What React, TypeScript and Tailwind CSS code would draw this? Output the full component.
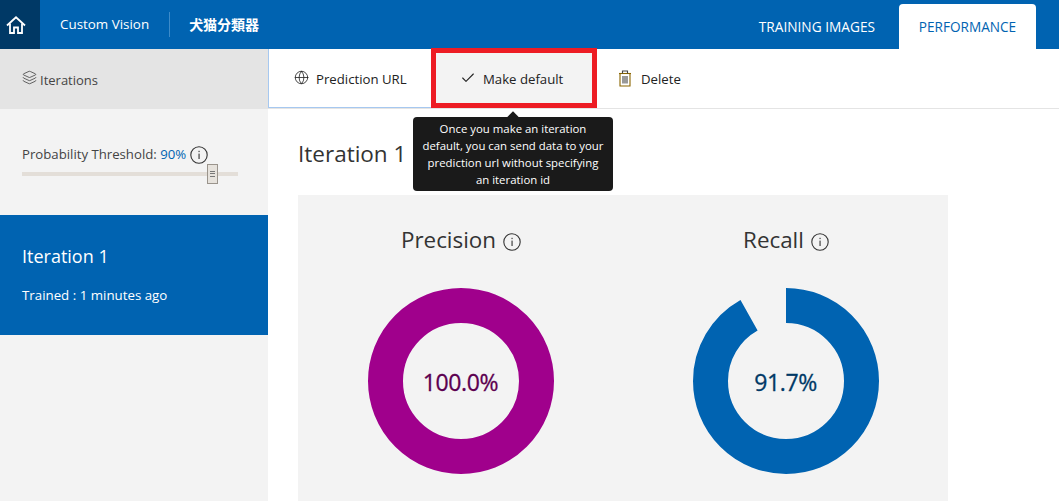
import { Check, Globe, Layers } from "lucide-react";

const font = { fontFamily: '"Open Sans", "Noto Sans CJK SC", sans-serif' };

function HomeIcon() {
  return (
    <svg width="20" height="18" viewBox="0 0 20 18" fill="none" stroke="currentColor" strokeWidth="1.8">
      <path d="M1 9.5 10 1.3l9 8.2" />
      <path d="M4 7.5V17h4v-5.5h4V17h4V7.5" />
    </svg>
  );
}

function TrashIcon() {
  return (
    <svg width="14" height="17" viewBox="0 0 14 17" fill="none" stroke="#8a6500" strokeWidth="1.1">
      <path d="M1 3.5h12" />
      <path d="M4.5 3.5V1h5v2.5" stroke="#444" />
      <path d="M2 3.5V16h10V3.5" />
      <path d="M5 6v7.5M7 6v7.5M9 6v7.5" stroke="#444" />
    </svg>
  );
}

function InfoIcon({ size = 18 }: { size?: number }) {
  return (
    <svg width={size} height={size} viewBox="0 0 18 18" fill="none" className="shrink-0">
      <circle cx="9" cy="9" r="8.2" stroke="#333" strokeWidth="1.1" />
      <rect x="8.5" y="7.6" width="1.1" height="5.4" fill="#333" />
      <rect x="8.5" y="4.8" width="1.1" height="1.3" fill="#333" />
    </svg>
  );
}

function Donut({ value, color, textColor }: { value: number; color: string; textColor: string }) {
  const r = 75.5;
  const circumference = 2 * Math.PI * r;
  return (
    <div className="relative h-[186px] w-[186px]">
      <svg width="186" height="186" viewBox="0 0 186 186" className="-rotate-90">
        <circle
          cx="93"
          cy="93"
          r={r}
          fill="none"
          stroke={color}
          strokeWidth="35"
          strokeDasharray={`${circumference * value} ${circumference}`}
        />
      </svg>
      <div
        className="absolute inset-0 flex items-center justify-center pt-[2px] text-[23px] tracking-[-0.4px] [-webkit-text-stroke:0.3px]"
        style={{ color: textColor }}
      >
        {(value * 100).toFixed(1)}%
      </div>
    </div>
  );
}

function Metric({ label, value, color, textColor }: { label: string; value: number; color: string; textColor: string }) {
  return (
    <div className="flex flex-col items-center pt-[28px]">
      <div className="flex h-[34px] items-center gap-[7px] pl-[1px] text-[22.4px] leading-none text-[#333]">
        <span>{label}</span>
        <span className="mt-[3px]">
          <InfoIcon />
        </span>
      </div>
      <div className="mt-[31px]">
        <Donut value={value} color={color} textColor={textColor} />
      </div>
    </div>
  );
}

export default function App() {
  return (
    <div className="relative flex h-[501px] w-[1059px] flex-col overflow-hidden bg-white text-[#333]" style={font}>
      {/* Header */}
      <header className="flex h-[49px] shrink-0 items-stretch bg-[#0063b1] text-white">
        <div className="flex w-[40px] items-center justify-start bg-[#003966] pl-[6px]">
          <HomeIcon />
        </div>
        <div className="flex items-center pl-[20px] pr-[20px] text-[13.4px]">Custom Vision</div>
        <div className="my-[12px] w-px bg-[#3d8bc9]" />
        <div className="flex items-center pl-[19px] text-[14px] font-bold">犬猫分類器</div>
        <div className="ml-auto flex items-end pr-[23px]">
          <div className="flex h-[45px] items-center px-[24px] pt-[2px] text-[13.7px]">TRAINING IMAGES</div>
          <div className="flex h-[45px] w-[137px] items-center justify-center rounded-t-[4px] bg-white pt-[2px] text-[13.6px] text-[#0063b1]">
            PERFORMANCE
          </div>
        </div>
      </header>

      <div className="flex min-h-0 flex-1">
        {/* Sidebar */}
        <aside className="flex w-[268px] shrink-0 flex-col bg-[#f3f3f3]">
          <div className="flex h-[60px] items-center gap-[3px] bg-[#e4e4e4] pl-[22px] text-[13px] text-[#444]">
            <Layers size={15} strokeWidth={1.3} className="-mt-[3px]" />
            <span className="mt-[3px]">Iterations</span>
          </div>
          <div className="h-[106px] px-[22px] pt-[36px]">
            <div className="flex items-center gap-[4px] text-[13.2px] text-[#444]">
              <span className="whitespace-nowrap">
                Probability Threshold: <span className="text-[#0063b1]">90%</span>
              </span>
              <InfoIcon />
            </div>
            <div className="relative mt-[7px] h-[4px] w-[216px] bg-[#e3ded8]">
              <div className="absolute left-[185px] top-[-8px] flex h-[20px] w-[11px] flex-col items-center justify-center gap-[1.5px] border border-[#9a948c] bg-[#e6e2dc]">
                <span className="h-px w-[5px] bg-[#777]" />
                <span className="h-px w-[5px] bg-[#777]" />
                <span className="h-px w-[5px] bg-[#777]" />
              </div>
            </div>
          </div>
          <div className="flex h-[120px] flex-col bg-[#0063b1] pl-[22px] pt-[27px] text-white">
            <div className="text-[18px] leading-[28px]">Iteration 1</div>
            <div className="mt-[16px] text-[13.3px] leading-[18px]">Trained : 1 minutes ago</div>
          </div>
        </aside>

        {/* Main */}
        <main className="min-w-0 flex-1">
          <div className="flex h-[60px] items-stretch border-b border-[#e4e4e4] text-[13.2px] text-[#222]">
            <div className="flex w-[163px] items-center gap-[7px] border-b border-l border-[#a6c8f0] pl-[25px]">
              <Globe size={15} strokeWidth={1.3} className="-mt-[2px]" />
              <span className="mt-[3px]">Prediction URL</span>
            </div>
            <div className="flex w-[165px] items-center gap-[7px] bg-[#f3f3f3] pl-[29px]">
              <Check size={16} strokeWidth={1.6} className="-mt-[2px]" />
              <span className="mt-[3px]">Make default</span>
            </div>
            <div className="flex items-center gap-[9px] pl-[22px]">
              <TrashIcon />
              <span className="mt-[3px]">Delete</span>
            </div>
          </div>
          <div className="pl-[30px]">
            <h1 className="mt-[28px] h-[34px] text-[22.5px] leading-[34px] font-normal">Iteration 1</h1>
            <section className="mt-[24px] grid h-[306px] w-[650px] grid-cols-2 bg-[#f3f3f3]">
              <Metric label="Precision" value={1} color="#a0008c" textColor="#5c0050" />
              <Metric label="Recall" value={0.917} color="#0063b1" textColor="#003966" />
            </section>
          </div>
        </main>
      </div>

      {/* Highlight box from the annotated screenshot */}
      <div className="pointer-events-none absolute left-[431px] top-[48px] h-[60px] w-[166px] border-[5px] border-[#ed1c24]" />

      {/* Tooltip */}
      <div className="absolute left-[413px] top-[117px] flex h-[74px] w-[200px] items-center justify-center rounded-[4px] bg-[#1a1a1a] text-center text-[11.4px] leading-[17px] text-white">
        <span className="absolute left-1/2 top-[-4px] h-[8px] w-[8px] -translate-x-1/2 rotate-45 bg-[#1a1a1a]" />
        <span className="relative">
          Once you make an iteration
          <br />
          default, you can send data to your
          <br />
          prediction url without specifying
          <br />
          an iteration id
        </span>
      </div>
    </div>
  );
}
